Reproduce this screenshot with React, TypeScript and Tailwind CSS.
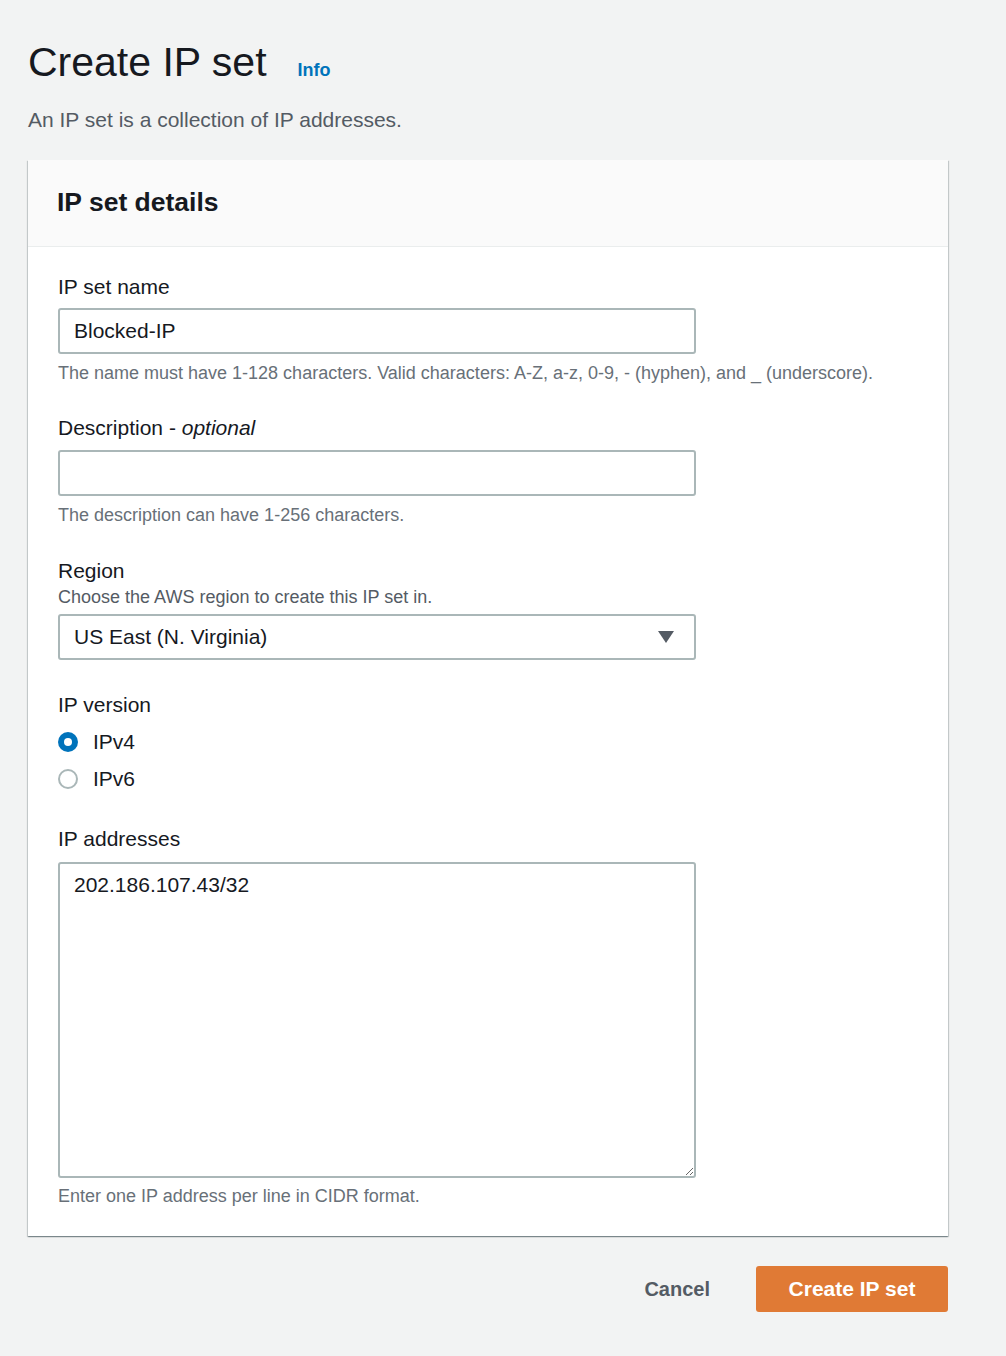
const FONT = "font-['Liberation_Sans',Arial,sans-serif]";

function Radio({ checked, label }: { checked: boolean; label: string }) {
  return (
    <div className="flex h-[28px] items-center gap-[15px]">
      {checked ? (
        <span className="flex h-[20px] w-[20px] items-center justify-center rounded-full bg-[#0073bb]">
          <span className="h-[8px] w-[8px] rounded-full bg-white" />
        </span>
      ) : (
        <span className="h-[20px] w-[20px] rounded-full border-2 border-[#aab7b8] bg-white" />
      )}
      <span className="text-[21px] leading-[28px] text-[#16191f]">{label}</span>
    </div>
  );
}

function Field({ label, children }: { label: React.ReactNode; children: React.ReactNode }) {
  return (
    <div className="flex flex-col">
      <label className="text-[21px] leading-[28px] text-[#16191f]">{label}</label>
      {children}
    </div>
  );
}

function Hint({ children, className = "" }: { children: React.ReactNode; className?: string }) {
  return <p className={`text-[18px] leading-[24px] text-[#687078] ${className}`}>{children}</p>;
}

export default function App() {
  return (
    <div className={`min-h-[1356px] w-full bg-[#f2f3f3] ${FONT}`}>
      <div className="px-[28px] pt-[38px]">
        <div className="flex items-baseline">
          <h1 className="text-[41px] leading-[48px] text-[#16191f]">Create IP set</h1>
          <a className="ml-[31px] text-[18px] font-bold text-[#0073bb]">Info</a>
        </div>
        <p className="mt-[20px] text-[21px] leading-[28px] text-[#545b64]">
          An IP set is a collection of IP addresses.
        </p>

        <div className="mt-[26px] w-[920px] bg-white shadow-[0_1px_1px_0_rgba(0,28,36,0.3),1px_1px_1px_0_rgba(0,28,36,0.15),-1px_1px_1px_0_rgba(0,28,36,0.15)]">
          <div className="flex h-[87px] items-center border-b border-[#eaeded] bg-[#fafafa] px-[29px]">
            <h2 className="text-[26.5px] font-bold text-[#16191f]">IP set details</h2>
          </div>

          <div className="px-[30px] pb-[28px] pt-[26px]">
            <Field label="IP set name">
              <input
                readOnly
                value="Blocked-IP"
                className="mt-[7px] h-[46px] w-[638px] rounded-[3px] border-2 border-[#aab7b8] px-[14px] text-[21px] text-[#16191f] outline-none"
              />
              <Hint className="mt-[7px]">
                The name must have 1-128 characters. Valid characters: A-Z, a-z, 0-9, - (hyphen), and _ (underscore).
              </Hint>
            </Field>

            <div className="mt-[29px]">
              <Field
                label={
                  <>
                    Description - <i>optional</i>
                  </>
                }
              >
                <input
                  readOnly
                  value=""
                  className="mt-[8px] h-[46px] w-[638px] rounded-[3px] border-2 border-[#aab7b8] px-[14px] text-[21px] text-[#16191f] outline-none"
                />
                <Hint className="mt-[7px]">The description can have 1-256 characters.</Hint>
              </Field>
            </div>

            <div className="mt-[30px]">
              <Field label="Region">
                <p className="text-[18px] leading-[24px] text-[#545b64]">
                  Choose the AWS region to create this IP set in.
                </p>
                <div className="mt-[5px] flex h-[46px] w-[638px] items-center justify-between rounded-[3px] border-2 border-[#aab7b8] pl-[14px] pr-[20px]">
                  <span className="text-[21px] text-[#16191f]">US East (N. Virginia)</span>
                  <svg width="16" height="12" viewBox="0 0 16 12">
                    <path d="M0 0 H16 L8 12 Z" fill="#545b64" />
                  </svg>
                </div>
              </Field>
            </div>

            <div className="mt-[31px]">
              <Field label="IP version">
                <div className="mt-[9px] flex flex-col gap-[9px]">
                  <Radio checked label="IPv4" />
                  <Radio checked={false} label="IPv6" />
                </div>
              </Field>
            </div>

            <div className="mt-[32px]">
              <Field label="IP addresses">
                <textarea
                  readOnly
                  value="202.186.107.43/32"
                  className="mt-[9px] h-[316px] w-[638px] resize rounded-[3px] border-2 border-[#aab7b8] px-[14px] py-[7px] text-[21px] leading-[28px] text-[#16191f] outline-none"
                />
                <Hint className="mt-[6px]">Enter one IP address per line in CIDR format.</Hint>
              </Field>
            </div>
          </div>
        </div>

        <div className="mt-[30px] flex w-[920px] items-center justify-end">
          <button className="mr-[46px] text-[20px] font-bold text-[#545b64]">Cancel</button>
          <button className="h-[46px] w-[192px] rounded-[3px] bg-[#e07a35] text-[21px] font-bold text-white">
            Create IP set
          </button>
        </div>
      </div>
    </div>
  );
}
